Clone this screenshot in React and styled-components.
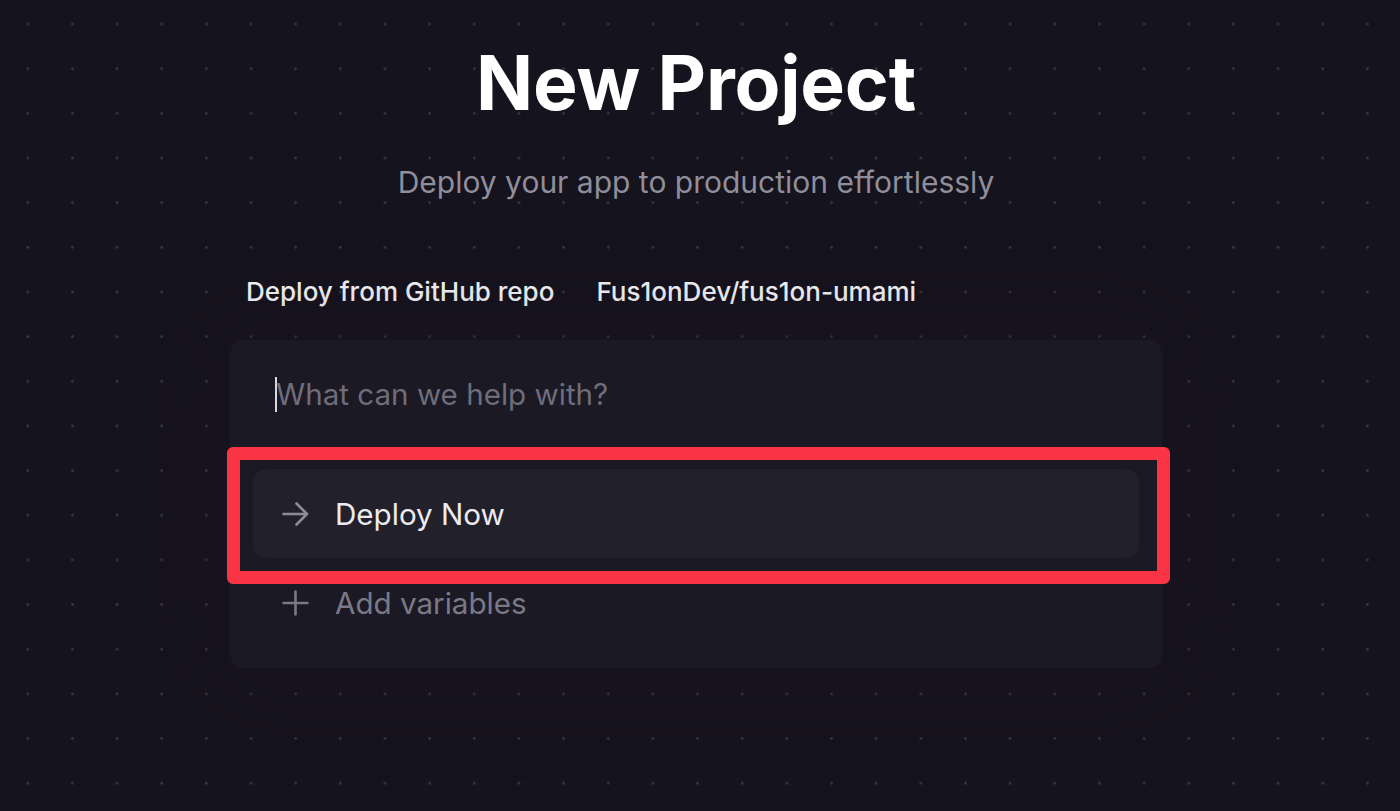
import React from "react";
import styled, { createGlobalStyle } from "styled-components";

const Global = createGlobalStyle`
  html, body { margin: 0; padding: 0; background: #15131d; }
  body { font-family: Inter, "Noto Sans", sans-serif; -webkit-font-smoothing: antialiased; }
  * { box-sizing: border-box; }
`;

const Page = styled.div`
  width: 1400px;
  height: 811px;
  overflow: hidden;
  padding-right: 8px;
  background-color: #15131d;
  background-image: radial-gradient(circle at center, #36343f 1.1px, transparent 1.6px);
  background-size: 44.67px 44.67px;
  background-position: 5.4px 1.7px;
  display: flex;
  flex-direction: column;
  align-items: center;
`;

const Title = styled.h1`
  margin: 39px 0 0;
  font-size: 75px;
  line-height: 88px;
  font-weight: 700;
  color: #ffffff;
  letter-spacing: -0.2px;
`;

const Subtitle = styled.p`
  margin: 38px 0 0;
  font-size: 30px;
  line-height: 34px;
  color: #908e9b;
  font-weight: 400;
`;

const Column = styled.div`
  width: 932px;
  margin-top: 78px;
  display: flex;
  flex-direction: column;
`;

const RepoRow = styled.div`
  display: flex;
  gap: 42px;
  padding-left: 16px;
  font-size: 26px;
  line-height: 30px;
  font-weight: 500;
  color: #f6f6f8;
`;

const Card = styled.div`
  margin-top: 33px;
  background: #1b1923;
  border-radius: 14px;
  padding: 26px 23px 34px;
  box-shadow: 0 0 90px 10px rgba(34, 20, 44, 0.35);
`;

const Prompt = styled.div`
  display: flex;
  align-items: center;
  padding-left: 22px;
  height: 56px;
  font-size: 29.6px;
  color: #6f6d7b;
`;

const Caret = styled.span`
  width: 2px;
  height: 35px;
  background: #d8d8de;
  margin-right: -1px;
`;

const Highlight = styled.div`
  position: relative;
  margin-top: 47px;
  &::after {
    content: "";
    position: absolute;
    left: -26px;
    right: -31px;
    top: -22px;
    bottom: -26px;
    border: 13.5px solid #f93545;
    border-radius: 6px;
    pointer-events: none;
  }
`;

const Action = styled.div`
  display: flex;
  align-items: center;
  gap: 26px;
  height: ${(p) => (p.$primary ? "89px" : "62px")};
  padding-left: 29px;
  border-radius: 14px;
  background: ${(p) => (p.$primary ? "#22202b" : "transparent")};
  color: ${(p) => (p.$primary ? "#ecebf0" : "#7b7987")};
  font-size: 29.6px;
  svg { flex: none; color: ${(p) => (p.$primary ? "#8d8b97" : "#7b7987")}; }
`;

const Extra = styled(Action)`
  margin-top: 14px;
`;

const ArrowIcon = () => (
  <svg width="27" height="24" viewBox="0 0 27 24" fill="none" stroke="currentColor" strokeWidth="2.6" strokeLinecap="round" strokeLinejoin="round">
    <path d="M1.5 12H25M14.5 1.5L25 12L14.5 22.5" />
  </svg>
);

const PlusIcon = () => (
  <svg width="27" height="26" viewBox="0 0 27 26" fill="none" stroke="currentColor" strokeWidth="2.6" strokeLinecap="round">
    <path d="M13.5 1.5V24.5M1.5 13H25.5" />
  </svg>
);

export default function App() {
  return (
    <>
      <Global />
      <Page>
        <Title>New Project</Title>
        <Subtitle>Deploy your app to production effortlessly</Subtitle>
        <Column>
          <RepoRow>
            <span>Deploy from GitHub repo</span>
            <span>Fus1onDev/fus1on-umami</span>
          </RepoRow>
          <Card>
            <Prompt>
              <Caret />
              What can we help with?
            </Prompt>
            <Highlight>
              <Action $primary>
                <ArrowIcon />
                Deploy Now
              </Action>
            </Highlight>
            <Extra>
              <PlusIcon />
              Add variables
            </Extra>
          </Card>
        </Column>
      </Page>
    </>
  );
}
